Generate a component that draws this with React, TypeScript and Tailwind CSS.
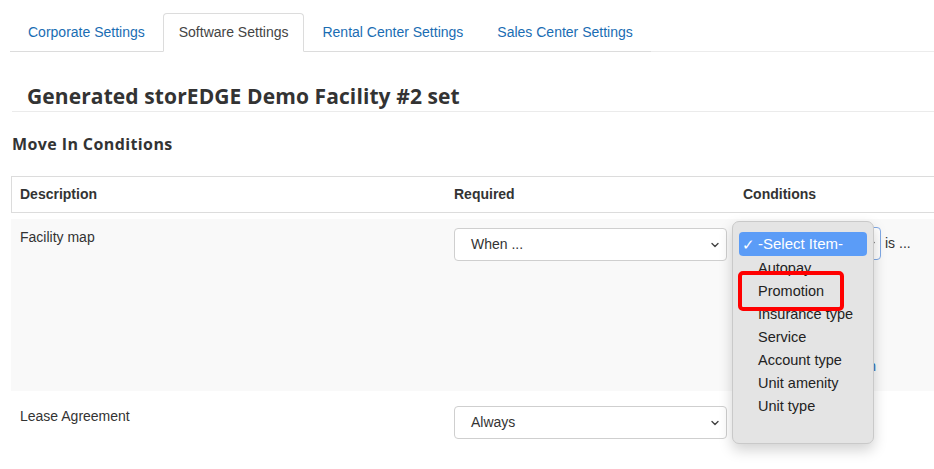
import React from "react";

const tabs = [
  { label: "Corporate Settings", active: false },
  { label: "Software Settings", active: true },
  { label: "Rental Center Settings", active: false },
  { label: "Sales Center Settings", active: false },
];

const options = ["Autopay", "Promotion", "Insurance type", "Service", "Account type", "Unit amenity", "Unit type"];

function Chevron() {
  return (
    <svg width="10" height="10" viewBox="0 0 10 10" className="shrink-0">
      <path d="M2 3.5 L5 6.5 L8 3.5" fill="none" stroke="#444" strokeWidth="1.4" strokeLinecap="round" strokeLinejoin="round" />
    </svg>
  );
}

function Select({ value, className = "" }: { value: string; className?: string }) {
  return (
    <div
      className={`flex h-[33px] items-center justify-between rounded-[4px] border border-[#cfcfcf] bg-white pl-[16px] pr-[6px] text-[14px] text-[#333] ${className}`}
    >
      <span>{value}</span>
      <Chevron />
    </div>
  );
}

export default function App() {
  return (
    <div className="relative h-[469px] w-[934px] overflow-hidden bg-white font-['Liberation_Sans',Arial,sans-serif] text-[#333]">
      {/* tabs */}
      <div className="flex pl-[10px] pt-[13px]">
        <div className="flex border-b border-[#dcdcdc] pl-[2px]">
          {tabs.map((t) =>
            t.active ? (
              <div
                key={t.label}
                className="-mb-px mr-[2px] flex h-[39px] items-center rounded-t-[4px] border border-b-white border-[#dcdcdc] bg-white px-[15px] text-[14px] text-[#444]"
              >
                {t.label}
              </div>
            ) : (
              <div key={t.label} className="mr-[2px] flex h-[38px] items-center px-[16px] text-[14px] text-[#1a6db3]">
                {t.label}
              </div>
            )
          )}
        </div>
        <div className="flex-1 border-b border-[#ececec]" />
      </div>

      {/* heading */}
      <div className="ml-[12px] mt-[31px] border-b border-[#ebebeb] pb-[2px] pl-[15px]">
        <h1 className="font-['Open_Sans',sans-serif] text-[21px] font-bold leading-[26px] tracking-[0.1px] text-[#333]">
          Generated storEDGE Demo Facility #2 set
        </h1>
      </div>

      <h2 className="ml-[12px] mt-[22px] font-['Open_Sans',sans-serif] text-[16px] font-bold leading-[20px] tracking-[0.4px] text-[#333]">
        Move In Conditions
      </h2>

      {/* table */}
      <div className="ml-[11px] mt-[22px] w-[960px]">
        <div className="grid h-[37px] grid-cols-[442px_281px_1fr] items-center border border-[#dcdcdc] text-[14px] font-bold">
          <div className="pl-[8px]">Description</div>
          <div>Required</div>
          <div className="pl-[8px]">Conditions</div>
        </div>

        <div className="relative mt-[6px] grid h-[172px] grid-cols-[442px_281px_1fr] bg-[#f9f9f9] pl-px text-[14px]">
          <div className="pl-[8px] pt-[8px]">Facility map</div>
          <div className="pt-[9px]">
            <Select value="When ..." className="w-[273px]" />
          </div>
          <div className="flex flex-col pl-[10px] pt-[8px]">
            <div className="flex items-center gap-[4px]">
              <div className="flex h-[33px] w-[136px] items-center justify-end rounded-[4px] border border-[#80a9e6] bg-white pr-[4px]">
                <Chevron />
              </div>
              <span className="text-[14px]">is ...</span>
            </div>
            <div className="mt-[96px] w-[131px] text-right text-[14px] text-[#1a6db3]">Add condition</div>
          </div>

          {/* native popup */}
          <div className="absolute left-[721px] top-[2px] z-10 h-[223px] w-[142px] rounded-[7px] border border-[#c9c9c9] bg-[#e4e4e4] px-[6px] pt-[10px] font-['Liberation_Sans',Arial,sans-serif] text-[14px] text-[#222] shadow-[0_6px_14px_rgba(0,0,0,0.18)]">
            <div className="mb-px flex h-[24px] items-center rounded-[4px] bg-[#5b9cf7] pl-[3px] text-white">
              <span className="w-[16px] text-[15px] leading-none">✓</span>
              <span className="text-[15px]">-Select Item-</span>
            </div>
            {options.map((o) => (
              <div key={o} className="flex h-[23px] items-center pl-[19px] text-[14.5px]">
                {o}
              </div>
            ))}
          </div>

          {/* red highlight */}
          <div className="absolute left-[727px] top-[52px] z-20 h-[40px] w-[106px] rounded-[5px] border-[4px] border-[#ff0000]" />
        </div>

        <div className="grid h-[60px] grid-cols-[442px_281px_1fr] pl-px text-[14px]">
          <div className="pl-[8px] pt-[15px]">Lease Agreement</div>
          <div className="pt-[15px]">
            <Select value="Always" className="w-[273px]" />
          </div>
          <div />
        </div>
      </div>
    </div>
  );
}
